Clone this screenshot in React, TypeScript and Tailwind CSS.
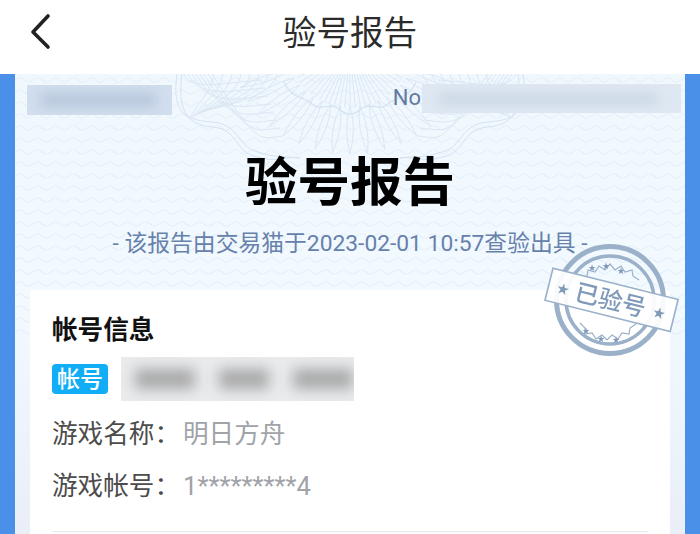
function Waves() {
  return (
    <svg className="absolute left-0 top-0" width="670" height="263">
      <defs>
        <pattern id="wave-bg" width="18" height="12" patternUnits="userSpaceOnUse">
          <path d="M0 6 q4.5 -4.5 9 0 t9 0" stroke="#e5f0f9" strokeWidth="1.1" fill="none" />
        </pattern>
      </defs>
      <rect width="670" height="263" fill="url(#wave-bg)" />
    </svg>
  );
}

function Rosette() {
  const cx = 350;
  const cy = 50;
  const fan = [];
  const petals = [];
  const side = [];
  for (let i = -14; i <= 14; i++) {
    const a = (i / 14) * 1.25;
    const sx = Math.sin(a);
    const cs = Math.cos(a);
    fan.push(<path key={`f${i}`} d={`M${cx + sx * 6} ${cy + cs * 6} L${cx + sx * 60} ${cy + cs * 58}`} />);
  }
  for (let i = -9; i <= 9; i++) {
    const a = (i / 9) * 1.35;
    const w = 0.075;
    const p = (r: number, t: number) => `${(cx + Math.sin(t) * r).toFixed(1)} ${(cy + Math.cos(t) * r * 0.88).toFixed(1)}`;
    petals.push(<path key={`p${i}`} d={`M${p(64, a)} Q ${p(90, a + w)} ${p(118, a)} Q ${p(90, a - w)} ${p(64, a)}`} />);
  }
  for (let i = 0; i < 8; i++) {
    const y = 74 + i * 8;
    side.push(<path key={`l${i}`} d={`M${184 + i * 4} ${74} C ${190 + i * 10} ${y + 18}, ${230 + i * 4} ${y + 8}, ${262 + i * 3} ${y + 6}`} />);
    side.push(<path key={`m${i}`} d={`M${214 + i * 9} 74 C ${210 + i * 9} ${96}, ${196 + i * 5} ${104}, ${190 + i * 2} ${118 - i}`} />);
    side.push(<path key={`r${i}`} d={`M${516 - i * 4} ${74} C ${510 - i * 10} ${y + 18}, ${470 - i * 4} ${y + 8}, ${438 - i * 3} ${y + 6}`} />);
    side.push(<path key={`n${i}`} d={`M${486 - i * 9} 74 C ${490 - i * 9} ${96}, ${504 - i * 5} ${104}, ${510 - i * 2} ${118 - i}`} />);
  }
  const scallop = "M284 82 C 292 100, 304 96, 312 104 C 322 112, 328 102, 338 108 C 346 116, 354 116, 362 108 C 372 102, 378 112, 388 104 C 396 96, 408 100, 416 82";
  const outer = (d: number) =>
    `M${177 + d} 74 C ${172 + d} 110, ${182 + d} ${120 + d}, ${212} ${122 + d} C ${240} ${124 + d}, ${238 - d} ${148 + d}, ${258} ${152 + d} C ${275} ${158 + d}, ${285} ${156}, 300 158 M${523 - d} 74 C ${528 - d} 110, ${518 - d} ${120 + d}, ${488} ${122 + d} C ${460} ${124 + d}, ${462 + d} ${148 + d}, ${442} ${152 + d} C ${425} ${158 + d}, ${415} ${156}, 400 158`;
  return (
    <svg className="absolute left-0 top-0" width="670" height="100" viewBox="15 74 670 100" fill="none" stroke="#dbe7f3" strokeWidth="1">
      {side}
      {fan}
      {petals}
      <path d={scallop} stroke="#d5e3f1" strokeWidth="1.3" />
      <path d={outer(0)} stroke="#d5e3f1" />
      <path d={outer(5)} stroke="#d5e3f1" />
    </svg>
  );
}

function Stamp() {
  const c = "#9ab1c9";
  return (
    <svg className="absolute left-[529px] top-[169px] pointer-events-none blur-[0.4px]" width="160" height="130" viewBox="0 0 160 130" fill="none">
      <circle cx="66" cy="57" r="53.5" stroke={c} strokeWidth="5" />
      <circle cx="66" cy="57" r="44" stroke={c} strokeWidth="3.5" />
      <path d="M38 37 l5 -4 l1 -6 l7 2 l4 -6 l6 4 l5 -6 l5 6 l6 -4 l4 6 l7 -2 l1 6 l6 4" stroke={c} strokeWidth="1.2" />
      <path d="M36 80 l5 5 l0 6 l7 -1 l4 6 l6 -4 l5 5 l5 -5 l6 4 l4 -6 l7 1 l1 -6 l6 -4" stroke={c} strokeWidth="1.2" />
      <g fill="#7f9ab8" fontSize="9" fontFamily="'DejaVu Sans'">
        <text x="44" y="28">★</text>
        <text x="58" y="26">★</text>
        <text x="73" y="31">★</text>
        <text x="38" y="91">★</text>
        <text x="53" y="99">★</text>
        <text x="68" y="100">★</text>
      </g>
      <g transform="rotate(14 66 57)">
        <rect x="3" y="40" width="129" height="33" fill="#ffffff" fillOpacity="0.92" stroke={c} strokeWidth="1.6" />
        <text x="11" y="63" fontSize="15" fill="#7f9ab8" fontFamily="'DejaVu Sans'">★</text>
        <text x="110" y="63" fontSize="15" fill="#7f9ab8" fontFamily="'DejaVu Sans'">★</text>
        <text x="66.5" y="65.5" fontSize="24" fontWeight="500" textAnchor="middle" fill="#7f9ab8" fontFamily="'Noto Sans CJK SC'">已验号</text>
      </g>
    </svg>
  );
}

export default function App() {
  return (
    <div className="h-[534px] w-[700px] overflow-hidden bg-white font-['Roboto','Noto_Sans_CJK_SC',sans-serif]">
      <header className="relative flex h-[74px] items-center justify-center bg-white">
        <svg className="absolute left-[28px] top-[13px]" width="26" height="38" viewBox="0 0 26 38" fill="none">
          <path d="M20 3 L5 19 L20 34" stroke="#222222" strokeWidth="3.6" strokeLinecap="round" strokeLinejoin="round" />
        </svg>
        <h1 className="-mt-[6px] text-[33.6px] leading-none text-[#2b2b2b]">验号报告</h1>
      </header>

      <div className="h-[460px] bg-[#4a90e8] px-[15px]">
        <main className="relative h-full bg-gradient-to-b from-[#f0f8fe] via-[#f2f9ff] to-[#eaeff7]">
          <Waves />
          <Rosette />
          <div className="relative flex h-[216px] flex-col">
            <div className="flex items-start justify-between pl-[12px] pr-[4px] pt-[9px]">
              <div className="mt-[2px] h-[30px] w-[145px] overflow-hidden bg-[#d1deee]">
                <div className="ml-[14px] mt-[8px] h-[14px] w-[115px] bg-[#b7c7dc] blur-[6px]" />
              </div>
              <div className="flex items-center">
                <span className="text-[22px] leading-[30px] text-[#64799f]">No</span>
                <div className="ml-[1px] h-[29px] w-[259px] overflow-hidden bg-[#dfe8f2]">
                  <div className="ml-[16px] mt-[9px] h-[12px] w-[220px] bg-[#ccd8e6] blur-[6px]" />
                </div>
              </div>
            </div>
            <h2 className="mt-[33px] text-center text-[52.5px] font-bold leading-[70px] text-black">验号报告</h2>
            <p className="mt-[11px] text-center text-[22.8px] leading-[30px] text-[#6781ab]">- 该报告由交易猫于2023-02-01 10:57查验出具 -</p>
          </div>

          <section className="relative mx-[15px] h-[260px] rounded-[3px] bg-white px-[22px] pt-[22px]">
            <h3 className="text-[25.6px] font-bold leading-[36px] text-[#111111]">帐号信息</h3>
            <div className="mt-[9px] flex items-center">
              <span className="flex h-[30px] w-[56px] items-center justify-center rounded-[4px] bg-[#12adf7] text-[23px] font-medium leading-none text-white">帐号</span>
              <div className="ml-[13px] h-[44px] w-[233px] overflow-hidden bg-[#e9ebed]">
                <div className="ml-[14px] mt-[12px] flex h-[20px] gap-[24px]">
                  <div className="h-full w-[60px] bg-[#a8a8a8] blur-[7px]" />
                  <div className="h-full w-[50px] bg-[#a8a8a8] blur-[7px]" />
                  <div className="h-full w-[60px] bg-[#a8a8a8] blur-[7px]" />
                </div>
              </div>
            </div>
            <div className="mt-[8px] flex items-center text-[25.6px] leading-[50px] text-[#4c4c4c]">
              <span className="w-[131px]">游戏名称：</span>
              <span className="text-[#a0a3a8]">明日方舟</span>
            </div>
            <div className="mt-[2px] flex items-center text-[25.6px] leading-[50px] text-[#4c4c4c]">
              <span className="w-[131px]">游戏帐号：</span>
              <span className="text-[#a0a3a8]">1*********4</span>
            </div>
            <div className="mt-[20px] h-px bg-[#e8e8e8]" />
          </section>

          <Stamp />
        </main>
      </div>
    </div>
  );
}
